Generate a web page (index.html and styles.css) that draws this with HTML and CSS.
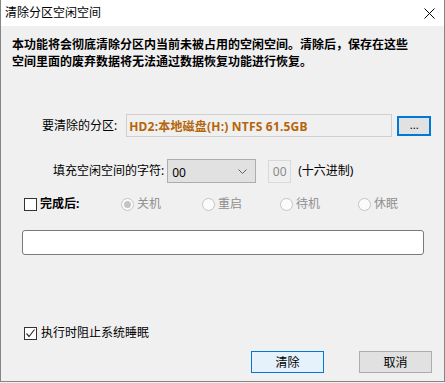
FILE: index.html
```html
<!DOCTYPE html>
<html lang="zh-CN">
<head>
<meta charset="utf-8">
<link rel="stylesheet" href="styles.css">
</head>
<body>
<div class="window">
  <div class="titlebar">
    <span class="title">清除分区空闲空间</span>
    <svg class="close" width="11" height="11" viewBox="0 0 11 11"><path d="M0.5 0.5 L10.5 10.5 M10.5 0.5 L0.5 10.5" stroke="#000" stroke-width="1" fill="none"/></svg>
  </div>
  <div class="content">
    <p class="desc">本功能将会彻底清除分区内当前未被占用的空闲空间。清除后，保存在这些<br>空间里面的废弃数据将无法通过数据恢复功能进行恢复。</p>
    <div class="row part-row">
      <span class="label part-label">要清除的分区:</span>
      <div class="part-box">HD2:本地磁盘(H:) NTFS 61.5GB</div>
      <div class="btn-dots">...</div>
    </div>
    <div class="row fill-row">
      <span class="label fill-label">填充空闲空间的字符:</span>
      <div class="combo"><span>00</span><svg width="9" height="5" viewBox="0 0 9 5"><path d="M0.5 0.5 L4.5 4.5 L8.5 0.5" stroke="#606060" fill="none"/></svg></div>
      <div class="hexbox">00</div>
      <span class="label hex-label">(十六进制)</span>
    </div>
    <div class="row after-row">
      <span class="check"></span>
      <span class="label bold after-label">完成后:</span>
      <span class="radio on"></span><span class="rtext">关机</span>
      <span class="radio r2"></span><span class="rtext">重启</span>
      <span class="radio r3"></span><span class="rtext">待机</span>
      <span class="radio r4"></span><span class="rtext">休眠</span>
    </div>
    <div class="progress"></div>
    <div class="row sleep-row">
      <span class="check checked"><svg width="11" height="11" viewBox="0 0 11 11"><path d="M1.5 5.5 L4 8.5 L9.5 1.5" stroke="#333" stroke-width="1.2" fill="none"/></svg></span>
      <span class="label">执行时阻止系统睡眠</span>
    </div>
    <div class="row btn-row">
      <div class="btn primary">清除</div>
      <div class="btn">取消</div>
    </div>
  </div>
</div>
</body>
</html>
```
FILE: styles.css
```css
* { box-sizing: border-box; }
html, body { margin: 0; padding: 0; }
body {
  width: 445px;
  height: 383px;
  font-family: "Noto Sans", "Noto Sans CJK SC", sans-serif;
  font-size: 12px;
  color: #000;
  background: #f0f0f0;
  overflow: hidden;
}
.window {
  width: 445px;
  height: 382px;
  border: 1px solid #858585;
  border-top: none;
  background: #f0f0f0;
  display: flex;
  flex-direction: column;
}
.titlebar {
  height: 26px;
  background: #fff;
  display: flex;
  align-items: center;
  justify-content: space-between;
  padding: 0 9px 0 4px;
  flex: none;
}
.title { font-size: 12px; line-height: 14px; }
.close { display: block; }
.content {
  display: flex;
  flex-direction: column;
  flex: 1;
}
.desc {
  margin: 10px 0 0 11px;
  font-weight: bold;
  line-height: 17px;
  font-size: 12px;
}
.row { display: flex; align-items: center; }
.row > * { flex: none; }
.label { line-height: 14px; white-space: nowrap; }
.bold { font-weight: bold; }
.part-row { margin-top: 44px; height: 23px; }
.part-label { margin-left: 41px; }
.part-box {
  margin-left: 9px;
  width: 266px;
  height: 23px;
  border: 1px solid #cfcfcf;
  background: #f0f0f0;
  color: #b5650a;
  font-weight: bold;
  padding-left: 2px;
  display: flex;
  align-items: center;
  font-size: 12px;
  letter-spacing: 0.2px;
}
.btn-dots {
  margin-left: 5px;
  width: 34px;
  height: 20px;
  border: 2px solid #0078d7;
  background: #e1e1e1;
  display: flex;
  align-items: center;
  justify-content: center;
  font-size: 11px;
  line-height: 10px;
  padding-bottom: 2px;
}
.fill-row { margin-top: 22px; height: 24px; }
.fill-label { margin-left: 52px; }
.combo {
  margin-left: 3px;
  width: 89px;
  height: 24px;
  border: 1px solid #adadad;
  background: #e1e1e1;
  display: flex;
  align-items: center;
  justify-content: space-between;
  padding: 2px 8px 0 4px;
}
.combo svg { display: block; margin-bottom: 2px; }
.hexbox {
  margin-left: 12px;
  width: 23px;
  height: 23px;
  border: 1px solid #d9d9d9;
  background: #f0f0f0;
  color: #8a8a8a;
  display: flex;
  align-items: center;
  justify-content: center;
}
.hex-label { margin-left: 7px; }
.after-row { margin-top: 14px; height: 14px; }
.check {
  width: 13px;
  height: 13px;
  border: 1px solid #333;
  background: #fff;
  margin-left: 23px;
  display: flex;
  align-items: center;
  justify-content: center;
}
.check svg { display: block; }
.after-label { margin-left: 3px; width: 81px; }
.radio {
  width: 13px;
  height: 13px;
  border: 1px solid #c4c4c4;
  border-radius: 50%;
  background: #fbfbfb;
  display: flex;
  align-items: center;
  justify-content: center;
}
.radio.on::after {
  content: "";
  width: 7px;
  height: 7px;
  border-radius: 50%;
  background: #c4c4c4;
}
.rtext { color: #8f8f8f; margin-left: 3px; line-height: 14px; white-space: nowrap; width: 24px; }
.r2 { margin-left: 41px; }
.r3 { margin-left: 38px; }
.r4 { margin-left: 38px; }
.progress {
  margin: 19px 0 0 21px;
  width: 402px;
  height: 25px;
  border: 1px solid #7a7a7a;
  border-radius: 3px;
  background: #fff;
}
.sleep-row { margin-top: 71px; height: 14px; }
.sleep-row .label { margin-left: 4px; }
.btn-row { margin-top: 11px; height: 22px; }
.btn {
  width: 73px;
  height: 22px;
  border: 1px solid #adadad;
  background: #e1e1e1;
  display: flex;
  align-items: center;
  justify-content: center;
  font-size: 12px;
}
.btn.primary {
  margin-left: 250px;
  border-color: #0078d7;
  background: #e5f1fb;
  margin-right: 35px;
}
```
